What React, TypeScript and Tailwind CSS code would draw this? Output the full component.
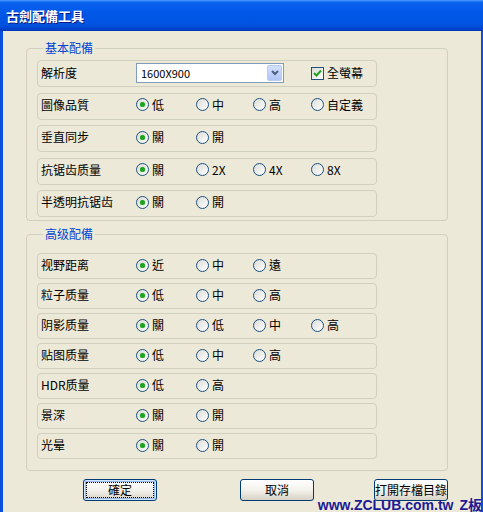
const FONT = "font-['Noto_Sans_CJK_TC','Noto_Sans_CJK_SC',sans-serif]";

const OPT_W = ["w-[60px]", "w-[57px]", "w-[58px]", "w-[58px]"];

type RowDef = { label: string; options: string[]; selected: number };

const BASIC: RowDef[] = [
  { label: "圖像品質", options: ["低", "中", "高", "自定義"], selected: 0 },
  { label: "垂直同步", options: ["關", "開"], selected: 0 },
  { label: "抗锯齿质量", options: ["關", "2X", "4X", "8X"], selected: 0 },
  { label: "半透明抗锯齿", options: ["關", "開"], selected: 0 },
];

const ADVANCED: RowDef[] = [
  { label: "视野距离", options: ["近", "中", "遠"], selected: 0 },
  { label: "粒子质量", options: ["低", "中", "高"], selected: 0 },
  { label: "阴影质量", options: ["關", "低", "中", "高"], selected: 0 },
  { label: "贴图质量", options: ["低", "中", "高"], selected: 0 },
  { label: "HDR质量", options: ["低", "高"], selected: 0 },
  { label: "景深", options: ["關", "開"], selected: 0 },
  { label: "光晕", options: ["關", "開"], selected: 0 },
];

function Radio({ label, checked, w }: { label: string; checked: boolean; w: string }) {
  return (
    <div className={`flex h-[16px] items-center ${w}`}>
      <span className="flex h-[13px] w-[13px] shrink-0 items-center justify-center rounded-full border border-[#1c5180] bg-linear-to-br from-[#dcdcd7] to-white">
        {checked && <span className="h-[5px] w-[5px] rounded-full bg-[#21a121] shadow-[0_0_1px_#5fd35f]" />}
      </span>
      <span className="ml-[3px] text-[12px] leading-[16px] text-black">{label}</span>
    </div>
  );
}

function OptionRow({ row, h }: { row: RowDef; h: string }) {
  return (
    <div className={`flex w-[340px] items-start rounded-[4px] border border-[#d0d0bf] pl-[3px] pt-[3px] ${h}`}>
      <div className="flex h-[16px] items-center">
        <span className="w-[95px] text-[12px] leading-[16px] text-black">{row.label}</span>
        {row.options.map((o, i) => (
          <Radio key={o + i} label={o} checked={i === row.selected} w={OPT_W[i]} />
        ))}
      </div>
    </div>
  );
}

function Checkbox({ label }: { label: string }) {
  return (
    <div className="flex h-[16px] items-center">
      <span className="flex h-[13px] w-[13px] items-center justify-center border border-[#1c5180] bg-linear-to-br from-[#dcdcd7] to-white">
        <svg width="9" height="9" viewBox="0 0 9 9">
          <path d="M1 4 L3.5 6.5 L8 1.5" fill="none" stroke="#21a121" strokeWidth="2" />
        </svg>
      </span>
      <span className="ml-[3px] text-[12px] leading-[16px] text-black">{label}</span>
    </div>
  );
}

function Combo() {
  return (
    <div className="flex h-[20px] w-[148px] items-center border border-[#7f9db9] bg-white pl-[4px] pr-[1px]">
      <span className="flex-1 text-[11px] leading-[16px] text-black">1600X900</span>
      <span className="flex h-[16px] w-[15px] items-center justify-center rounded-[2px] border border-[#b9cbf3] bg-linear-to-b from-[#d4e0fd] to-[#b1c6f7]">
        <svg width="8" height="6" viewBox="0 0 8 6">
          <path d="M1 1 L4 4 L7 1" fill="none" stroke="#4d6185" strokeWidth="2" />
        </svg>
      </span>
    </div>
  );
}

function XpButton({ label, focused, ml }: { label: string; focused?: boolean; ml: string }) {
  return (
    <button
      className={`relative h-[22px] w-[74px] rounded-[3px] border border-[#003c74] bg-linear-to-b from-white via-[#f3f2ec] to-[#d8d2c6] text-[12px] leading-[16px] text-black ${ml} ${
        focused ? "shadow-[inset_0_0_0_1px_#cee7ff,inset_0_0_0_2px_#98b8ea]" : ""
      }`}
    >
      {focused && <span className="absolute inset-[2px] border border-dotted border-black" />}
      <span className="relative">{label}</span>
    </button>
  );
}

export default function App() {
  return (
    <div className={`relative flex h-[512px] w-[483px] flex-col overflow-hidden bg-[#0a4fdc] ${FONT}`}>
      <div className="flex h-[31px] shrink-0 items-center bg-[linear-gradient(to_bottom,#4a9bff_0%,#0a62ee_8%,#0058e8_40%,#0053e0_80%,#0040c8_95%,#0033b0_100%)] pl-[6px]">
        <span className="text-[13px] font-bold leading-[16px] text-white [text-shadow:1px_1px_0_#0a1883]">古劍配備工具</span>
      </div>
      <div className="ml-[3px] mr-[2px] flex flex-1 flex-col bg-[#ece9d8]">
        <fieldset className="ml-[23px] mt-[9px] w-[422px] rounded-[4px] border border-[#d0d0bf] pb-[3px] pl-[10px] pt-[4px]">
          <legend className="ml-[6px] px-[2px] text-[12px] leading-[16px] text-[#0046d5]">基本配備</legend>
          <div className="flex flex-col gap-[5.5px]">
            <div className="flex h-[27px] w-[340px] items-start rounded-[4px] border border-[#d0d0bf] pl-[3px] pt-[2px]">
              <div className="flex h-[20px] items-center">
                <span className="w-[95px] text-[12px] leading-[16px] text-black">解析度</span>
                <Combo />
                <div className="ml-[27px]">
                  <Checkbox label="全螢幕" />
                </div>
              </div>
            </div>
            {BASIC.map((r) => (
              <OptionRow key={r.label} row={r} h="h-[27px]" />
            ))}
          </div>
        </fieldset>
        <fieldset className="ml-[23px] mt-[5px] w-[422px] rounded-[4px] border border-[#d0d0bf] pb-[11px] pl-[10px] pt-[11px]">
          <legend className="ml-[6px] px-[2px] text-[12px] leading-[16px] text-[#0046d5]">高级配備</legend>
          <div className="flex flex-col gap-[4px]">
            {ADVANCED.map((r) => (
              <OptionRow key={r.label} row={r} h="h-[26px]" />
            ))}
          </div>
        </fieldset>
        <div className="mt-[8px] flex">
          <XpButton label="確定" focused ml="ml-[80px]" />
          <XpButton label="取消" ml="ml-[83px]" />
          <XpButton label="打開存檔目錄" ml="ml-[60px]" />
        </div>
      </div>
      <div className="absolute bottom-[-1px] right-[1px] flex items-end gap-[6px] font-['Liberation_Sans','Noto_Sans_CJK_TC',sans-serif] text-[14px] font-bold leading-[16px] text-[#1d1b96]">
        <span>www.ZCLUB.com.tw</span>
        <span>Z板</span>
      </div>
    </div>
  );
}
